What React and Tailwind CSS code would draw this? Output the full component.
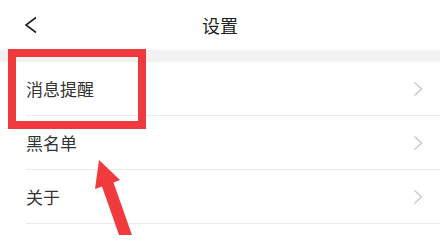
const items = ["消息提醒", "黑名单", "关于"];

function Row({ label }) {
  return (
    <div className="pl-[26px]">
      <div className="flex h-[54px] items-center justify-between border-b border-[#ebebeb] pr-[17px]">
        <span className="text-[17px] text-[#333]">{label}</span>
        <svg width="10" height="16" viewBox="0 0 10 16" fill="none">
          <path d="M1.5 1.5 L8.5 8 L1.5 14.5" stroke="#c8c8c8" strokeWidth="1.4" />
        </svg>
      </div>
    </div>
  );
}

export default function App() {
  return (
    <div
      className="relative h-[235px] w-[446px] overflow-hidden bg-white"
      style={{ fontFamily: '"Noto Sans CJK SC", "Noto Sans", sans-serif' }}
    >
      <div className="w-[440px]">
        {/* header */}
        <div className="grid h-[50px] grid-cols-[60px_1fr_60px] items-center">
          <div className="pl-[24px]">
            <svg width="14" height="18" viewBox="0 0 14 18" fill="none">
              <path d="M12 1.5 L2 9 L12 16.5" stroke="#222" strokeWidth="1.6" />
            </svg>
          </div>
          <div className="text-center text-[18px] text-[#222]">设置</div>
          <div />
        </div>
        <div className="h-[12px] bg-[#f2f2f2]" />
        {items.map((label) => (
          <Row key={label} label={label} />
        ))}
      </div>

      {/* annotation */}
      <div className="absolute left-[8px] top-[49px] h-[80px] w-[138px] border-[8px] border-[#f03a3e]" />
      <svg className="absolute left-0 top-0" width="446" height="235" viewBox="0 0 446 235">
        <polygon
          points="99,160 120,180 113.5,182.5 133,238 121.5,242 102,186.5 95,189"
          fill="#f03a3e"
        />
      </svg>
    </div>
  );
}
